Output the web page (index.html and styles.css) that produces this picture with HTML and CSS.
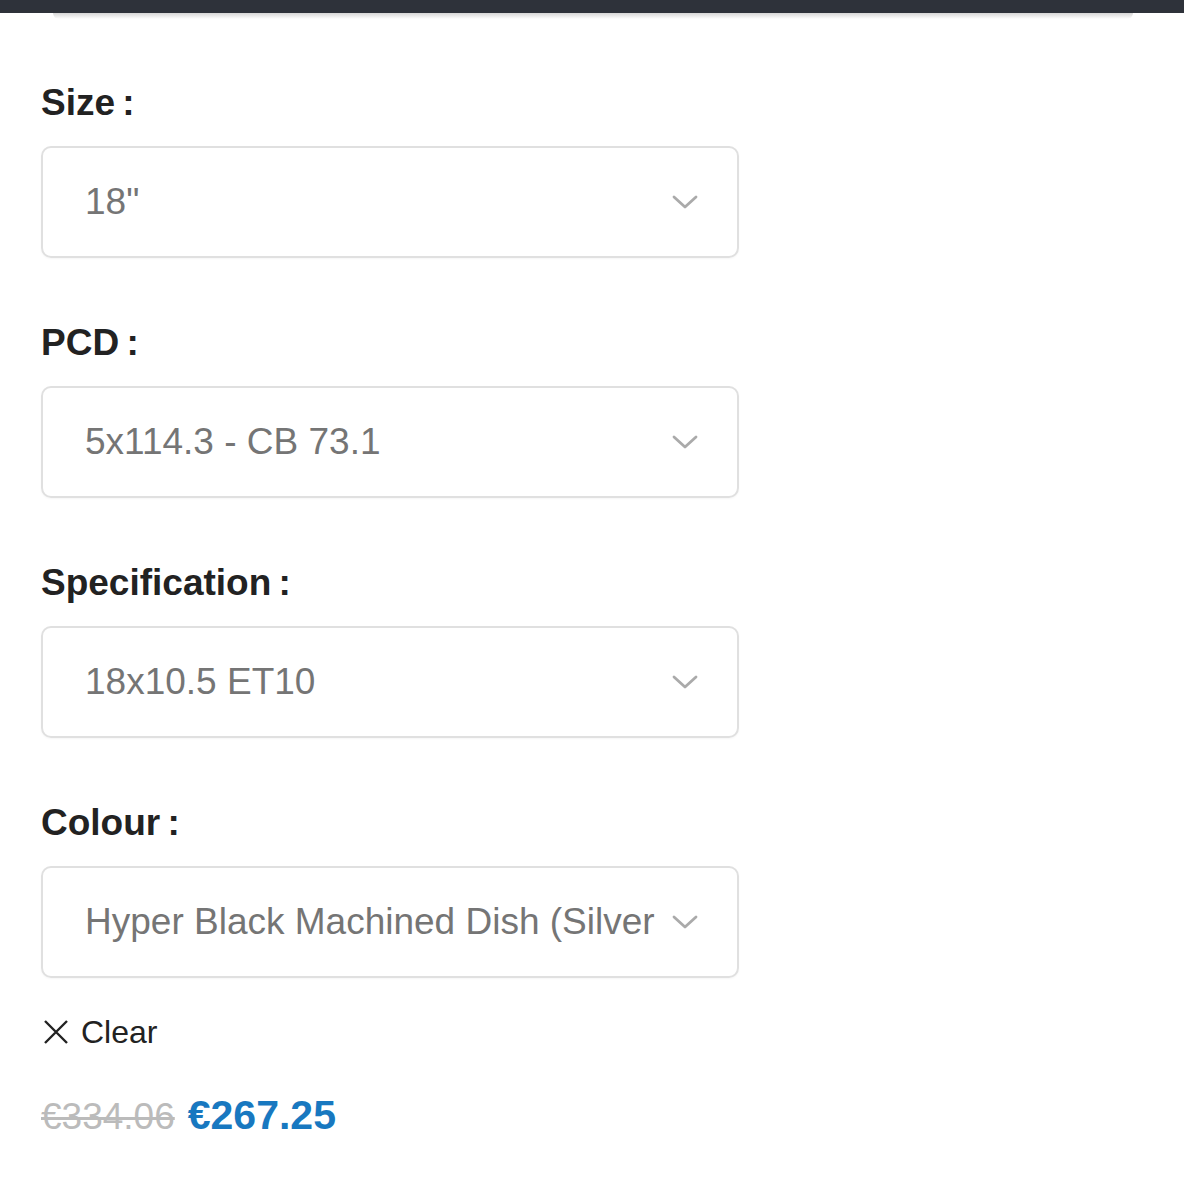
FILE: index.html
```html
<!DOCTYPE html>
<html lang="en">
<head>
<meta charset="utf-8">
<title>Variations</title>
<link rel="stylesheet" href="styles.css">
</head>
<body>
<header class="topbar"><div class="topbar-shadow"></div></header>
<main class="variations">
  <div class="field">
    <label class="field-label">Size :</label>
    <div class="select"><span class="select-value">18"</span><svg class="chev" viewBox="0 0 26 14" width="26" height="14"><path d="M2 2 L13 12 L24 2" fill="none" stroke="#aaa" stroke-width="2.8" stroke-linecap="round" stroke-linejoin="round"/></svg></div>
  </div>
  <div class="field">
    <label class="field-label">PCD :</label>
    <div class="select"><span class="select-value">5x114.3 - CB 73.1</span><svg class="chev" viewBox="0 0 26 14" width="26" height="14"><path d="M2 2 L13 12 L24 2" fill="none" stroke="#aaa" stroke-width="2.8" stroke-linecap="round" stroke-linejoin="round"/></svg></div>
  </div>
  <div class="field">
    <label class="field-label">Specification :</label>
    <div class="select"><span class="select-value">18x10.5 ET10</span><svg class="chev" viewBox="0 0 26 14" width="26" height="14"><path d="M2 2 L13 12 L24 2" fill="none" stroke="#aaa" stroke-width="2.8" stroke-linecap="round" stroke-linejoin="round"/></svg></div>
  </div>
  <div class="field field-last">
    <label class="field-label">Colour :</label>
    <div class="select"><span class="select-value">Hyper Black Machined Dish (Silver Lip)</span><svg class="chev" viewBox="0 0 26 14" width="26" height="14"><path d="M2 2 L13 12 L24 2" fill="none" stroke="#aaa" stroke-width="2.8" stroke-linecap="round" stroke-linejoin="round"/></svg></div>
  </div>
  <a class="clear"><svg class="clear-x" viewBox="0 0 26 26" width="26" height="26"><path d="M2 2 L24 24 M24 2 L2 24" stroke="#222" stroke-width="2.4" fill="none"/></svg><span>Clear</span></a>
  <div class="price"><del class="old">€334.06</del><ins class="new">€267.25</ins></div>
</main>
</body>
</html>
```
FILE: styles.css
```css
html, body {
  margin: 0;
  padding: 0;
  background: #fff;
}
body {
  font-family: "Liberation Sans", Arial, sans-serif;
  color: #222;
}
.topbar {
  height: 13px;
  background: #2e323a;
  position: relative;
}
.topbar-shadow {
  position: absolute;
  left: 53px;
  right: 51px;
  top: 13px;
  height: 6px;
  background: linear-gradient(#d6d6d6, rgba(255,255,255,0));
  border-radius: 0 0 6px 6px;
}
.variations {
  padding: 68px 0 40px 41px;
  width: 698px;
}
.field {
  margin-bottom: 63px;
}
.field-last {
  margin-bottom: 34px;
}
.field-label {
  display: block;
  font-size: 37px;
  font-weight: bold;
  line-height: 44px;
  word-spacing: -3px;
  color: #222;
  margin-bottom: 21px;
}
.select {
  box-sizing: border-box;
  height: 112px;
  border: 2px solid #e0e0e0;
  border-radius: 10px;
  display: flex;
  align-items: center;
  padding: 0 39px 0 42px;
  box-shadow: 0 1px 2px rgba(0,0,0,0.04);
}
.select-value {
  flex: 1;
  min-width: 0;
  overflow: hidden;
  white-space: nowrap;
  font-size: 37px;
  color: #757575;
  margin-right: 14px;
}
.chev {
  flex: none;
}
.clear {
  display: flex;
  align-items: center;
  gap: 12px;
  height: 40px;
  font-size: 32px;
  color: #222;
  padding-left: 2px;
}
.price {
  margin-top: 38px;
  line-height: 50px;
  display: flex;
  align-items: baseline;
  gap: 13px;
}
.old {
  font-size: 37px;
  color: #bbb;
  text-decoration: line-through;
  text-decoration-thickness: 3px;
}
.new {
  text-decoration: none;
  font-size: 41px;
  font-weight: bold;
  color: #1878c0;
}
```
